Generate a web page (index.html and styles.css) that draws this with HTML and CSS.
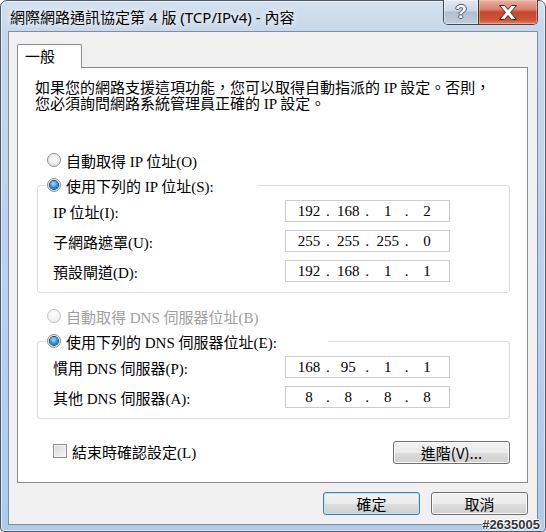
FILE: index.html
```html
<!DOCTYPE html>
<html lang="zh-Hant">
<head>
    <meta charset="UTF-8">
    <meta name="viewport" content="width=device-width, initial-scale=1.0">
    <title>網際網路通訊協定第 4 版 (TCP/IPv4) - 內容</title>
    <link rel="stylesheet" href="styles.css">
</head>
<body>
    <div class="window">
        <div class="titlebar">
            <span class="title">網際網路通訊協定第 4 版 (TCP/IPv4) - 內容</span>
            <div class="caption-buttons">
                <span class="cap-btn help">?</span>
                <span class="cap-btn close">
                    <svg width="20" height="15" viewBox="0 0 20 15">
                        <path d="M1.5,0.5 H6.5 L10,4.5 L13.5,0.5 H18.5 L12.5,7.5 L18.5,14.5 H13.5 L10,10.5 L6.5,14.5 H1.5 L7.5,7.5 Z" fill="#fff" stroke="#4a2a22" stroke-width="1"/>
                    </svg>
                </span>
            </div>
        </div>

        <div class="client">
            <div class="tabs">
                <span class="tab">一般</span>
            </div>

            <div class="panel">
                <p class="desc">如果您的網路支援這項功能，您可以取得自動指派的 IP 設定。否則，<br>您必須詢問網路系統管理員正確的 IP 設定。</p>

                <div class="option"><span class="radio"></span>自動取得 IP 位址(O)</div>

                <fieldset class="group">
                    <legend class="legend-ip"><span class="radio on"></span>使用下列的 IP 位址(S):</legend>
                    <div class="rows">
                        <div class="row">
                            <label>IP 位址(I):</label>
                            <div class="ip"><span class="octet">192</span><span class="dot">.</span><span class="octet">168</span><span class="dot">.</span><span class="octet">1</span><span class="dot">.</span><span class="octet">2</span></div>
                        </div>
                        <div class="row">
                            <label>子網路遮罩(U):</label>
                            <div class="ip"><span class="octet">255</span><span class="dot">.</span><span class="octet">255</span><span class="dot">.</span><span class="octet">255</span><span class="dot">.</span><span class="octet">0</span></div>
                        </div>
                        <div class="row">
                            <label>預設閘道(D):</label>
                            <div class="ip"><span class="octet">192</span><span class="dot">.</span><span class="octet">168</span><span class="dot">.</span><span class="octet">1</span><span class="dot">.</span><span class="octet">1</span></div>
                        </div>
                    </div>
                </fieldset>

                <div class="option disabled dns-auto"><span class="radio"></span>自動取得 DNS 伺服器位址(B)</div>

                <fieldset class="group">
                    <legend class="legend-dns"><span class="radio on"></span>使用下列的 DNS 伺服器位址(E):</legend>
                    <div class="rows">
                        <div class="row">
                            <label>慣用 DNS 伺服器(P):</label>
                            <div class="ip"><span class="octet">168</span><span class="dot">.</span><span class="octet">95</span><span class="dot">.</span><span class="octet">1</span><span class="dot">.</span><span class="octet">1</span></div>
                        </div>
                        <div class="row">
                            <label>其他 DNS 伺服器(A):</label>
                            <div class="ip"><span class="octet">8</span><span class="dot">.</span><span class="octet">8</span><span class="dot">.</span><span class="octet">8</span><span class="dot">.</span><span class="octet">8</span></div>
                        </div>
                    </div>
                </fieldset>

                <div class="panel-foot">
                    <div class="checkbox"><span class="check"></span>結束時確認設定(L)</div>
                    <button class="btn advanced">進階(V)...</button>
                </div>
            </div>

            <div class="footer">
                <button class="btn default">確定</button>
                <button class="btn">取消</button>
            </div>
        </div>

        <span class="watermark">#2635005</span>
    </div>
</body>
</html>
```

FILE: styles.css
```css
body {
    margin: 0;
    background-color: #fff;
    font-family: "Liberation Serif", "Noto Sans CJK TC", serif;
    font-size: 15px;
    color: #000;
}
.window {
    position: relative;
    width: 546px;
    height: 532px;
    box-sizing: border-box;
    border: 1px solid #4b5a6d;
    border-radius: 7px 7px 4px 4px;
    padding: 0 7px 8px 7px;
    background: linear-gradient(180deg, #d4e0ed 0%, #c6d7ea 6%, #bcd2ea 50%, #aecbeb 100%);
    box-shadow: inset 0 0 0 1px rgba(255,255,255,0.55);
    display: flex;
    flex-direction: column;
}
.titlebar {
    height: 30px;
    display: flex;
    justify-content: space-between;
    align-items: center;
    flex: none;
}
.title {
    margin-left: 2px;
    font-family: "Noto Sans", "Noto Sans CJK TC", sans-serif;
    font-size: 15px;
    text-shadow: 0 0 6px rgba(255,255,255,0.9), 0 0 10px rgba(255,255,255,0.7);
}
.caption-buttons {
    align-self: flex-start;
    display: flex;
    height: 24px;
    margin-top: -1px;
    border: 1px solid #3e4a5a;
    border-top: none;
    border-radius: 0 0 5px 5px;
    overflow: hidden;
}
.cap-btn {
    display: flex;
    align-items: center;
    justify-content: center;
    box-sizing: border-box;
    height: 100%;
}
.help {
    width: 34px;
    background: linear-gradient(180deg, #e2e9f1 0%, #cdd7e3 45%, #b0bfd0 50%, #bfcddc 100%);
    box-shadow: inset 0 0 0 1px rgba(255,255,255,0.45);
    font-family: "Liberation Sans", sans-serif;
    font-weight: bold;
    font-size: 19px;
    color: #fff;
    text-shadow: 1px 0 0 #4b5868, -1px 0 0 #4b5868, 0 1px 0 #4b5868, 0 -1px 0 #4b5868;
}
.close {
    width: 59px;
    border-left: 1px solid #4a2f2a;
    background: linear-gradient(180deg, #eab0a3 0%, #d9806c 40%, #c7462a 50%, #cf5538 85%, #e08866 100%);
    box-shadow: inset 0 0 0 1px rgba(255,220,210,0.4);
}
.client {
    flex: 1;
    border: 1px solid #7c8ea4;
    background-color: #f0f0f0;
    padding: 12px 9px 9px 8px;
    display: flex;
    flex-direction: column;
}
.tabs {
    display: flex;
}
.tab {
    position: relative;
    z-index: 1;
    width: 65px;
    height: 24px;
    box-sizing: border-box;
    margin-bottom: -1px;
    padding-left: 7px;
    border: 1px solid #898c95;
    border-bottom: none;
    border-radius: 2px 2px 0 0;
    background-color: #fff;
    font-family: "Noto Sans CJK TC", sans-serif;
    line-height: 22px;
}
.panel {
    background-color: #fff;
    border: 1px solid #898c95;
    padding-bottom: 18px;
}
.desc {
    margin: 12px 0 0 17px;
    line-height: 16px;
}
.option {
    display: flex;
    align-items: center;
    height: 20px;
    margin: 38px 0 0 29px;
}
.option.dns-auto {
    margin-top: 13px;
}
.option.disabled {
    color: #a0a0a0;
}
.radio {
    width: 14px;
    height: 14px;
    box-sizing: border-box;
    border-radius: 50%;
    border: 1px solid #8f8f8f;
    background: radial-gradient(circle at 50% 35%, #fff 0%, #ececec 55%, #cfcfcf 100%);
    margin-right: 5px;
    display: flex;
    align-items: center;
    justify-content: center;
    flex: none;
}
.disabled .radio {
    border-color: #c2c2c2;
    background: radial-gradient(circle at 50% 35%, #fff 0%, #f2f2f2 60%, #e2e2e2 100%);
}
.radio.on::after {
    content: "";
    width: 8px;
    height: 8px;
    border-radius: 50%;
    background: radial-gradient(circle at 45% 35%, #b4e6ff 0%, #3a9be8 45%, #0c4591 100%);
    box-shadow: 0 0 0 1px #173f74;
}
.group {
    min-width: 0;
    margin: 5px 17px 0 19px;
    padding: 5px 0 10px 15px;
    border: 1px solid #d5dfe5;
    border-radius: 3px;
}
.group legend {
    display: flex;
    align-items: center;
    height: 20px;
    padding: 0;
    margin-left: -7px;
}
.group legend .radio {
    margin-left: 1px;
}
.legend-ip {
    width: 211px;
}
.legend-dns {
    width: 282px;
}
.rows {
    display: flex;
    flex-direction: column;
    gap: 8px;
}
.row {
    display: flex;
    align-items: center;
    height: 22px;
}
.row label {
    width: 232px;
}
.ip {
    width: 165px;
    height: 22px;
    box-sizing: border-box;
    border: 1px solid #c9cdd3;
    padding-left: 6px;
    display: flex;
    align-items: center;
}
.octet {
    width: 34px;
    text-align: center;
}
.dot {
    width: 5.33px;
}
.panel-foot {
    display: flex;
    justify-content: space-between;
    align-items: flex-start;
    margin: 22px 17px 0 35px;
}
.checkbox {
    display: flex;
    align-items: center;
    height: 20px;
}
.check {
    width: 14px;
    height: 14px;
    box-sizing: border-box;
    border: 1px solid #8f8f8f;
    background: linear-gradient(135deg, #d6d6d6 0%, #f6f6f6 100%);
    box-shadow: inset 0 0 0 1px #f4f4f4;
    margin-right: 5px;
}
.btn {
    width: 97px;
    height: 23px;
    box-sizing: border-box;
    padding: 0;
    border: 1px solid #707070;
    border-radius: 3px;
    background: linear-gradient(180deg, #f2f2f2 0%, #ebebeb 50%, #dddddd 51%, #cfcfcf 100%);
    box-shadow: inset 0 0 0 1px #fbfbfb;
    font-family: "Noto Sans CJK TC", sans-serif;
    font-size: 15px;
    line-height: 21px;
    color: #000;
}
.btn.advanced {
    width: 117px;
}
.btn.default {
    border-color: #3c7fb1;
    box-shadow: inset 0 0 0 1px #bde3f7;
}
.footer {
    display: flex;
    justify-content: flex-end;
    gap: 11px;
    margin-top: 9px;
}
.watermark {
    position: absolute;
    right: 5px;
    bottom: 0;
    font-family: "Liberation Sans", sans-serif;
    font-weight: bold;
    font-size: 13px;
    line-height: 13px;
    color: #333;
    text-shadow: 1px 0 0 #fff, -1px 0 0 #fff, 0 1px 0 #fff, 0 -1px 0 #fff;
}
```
